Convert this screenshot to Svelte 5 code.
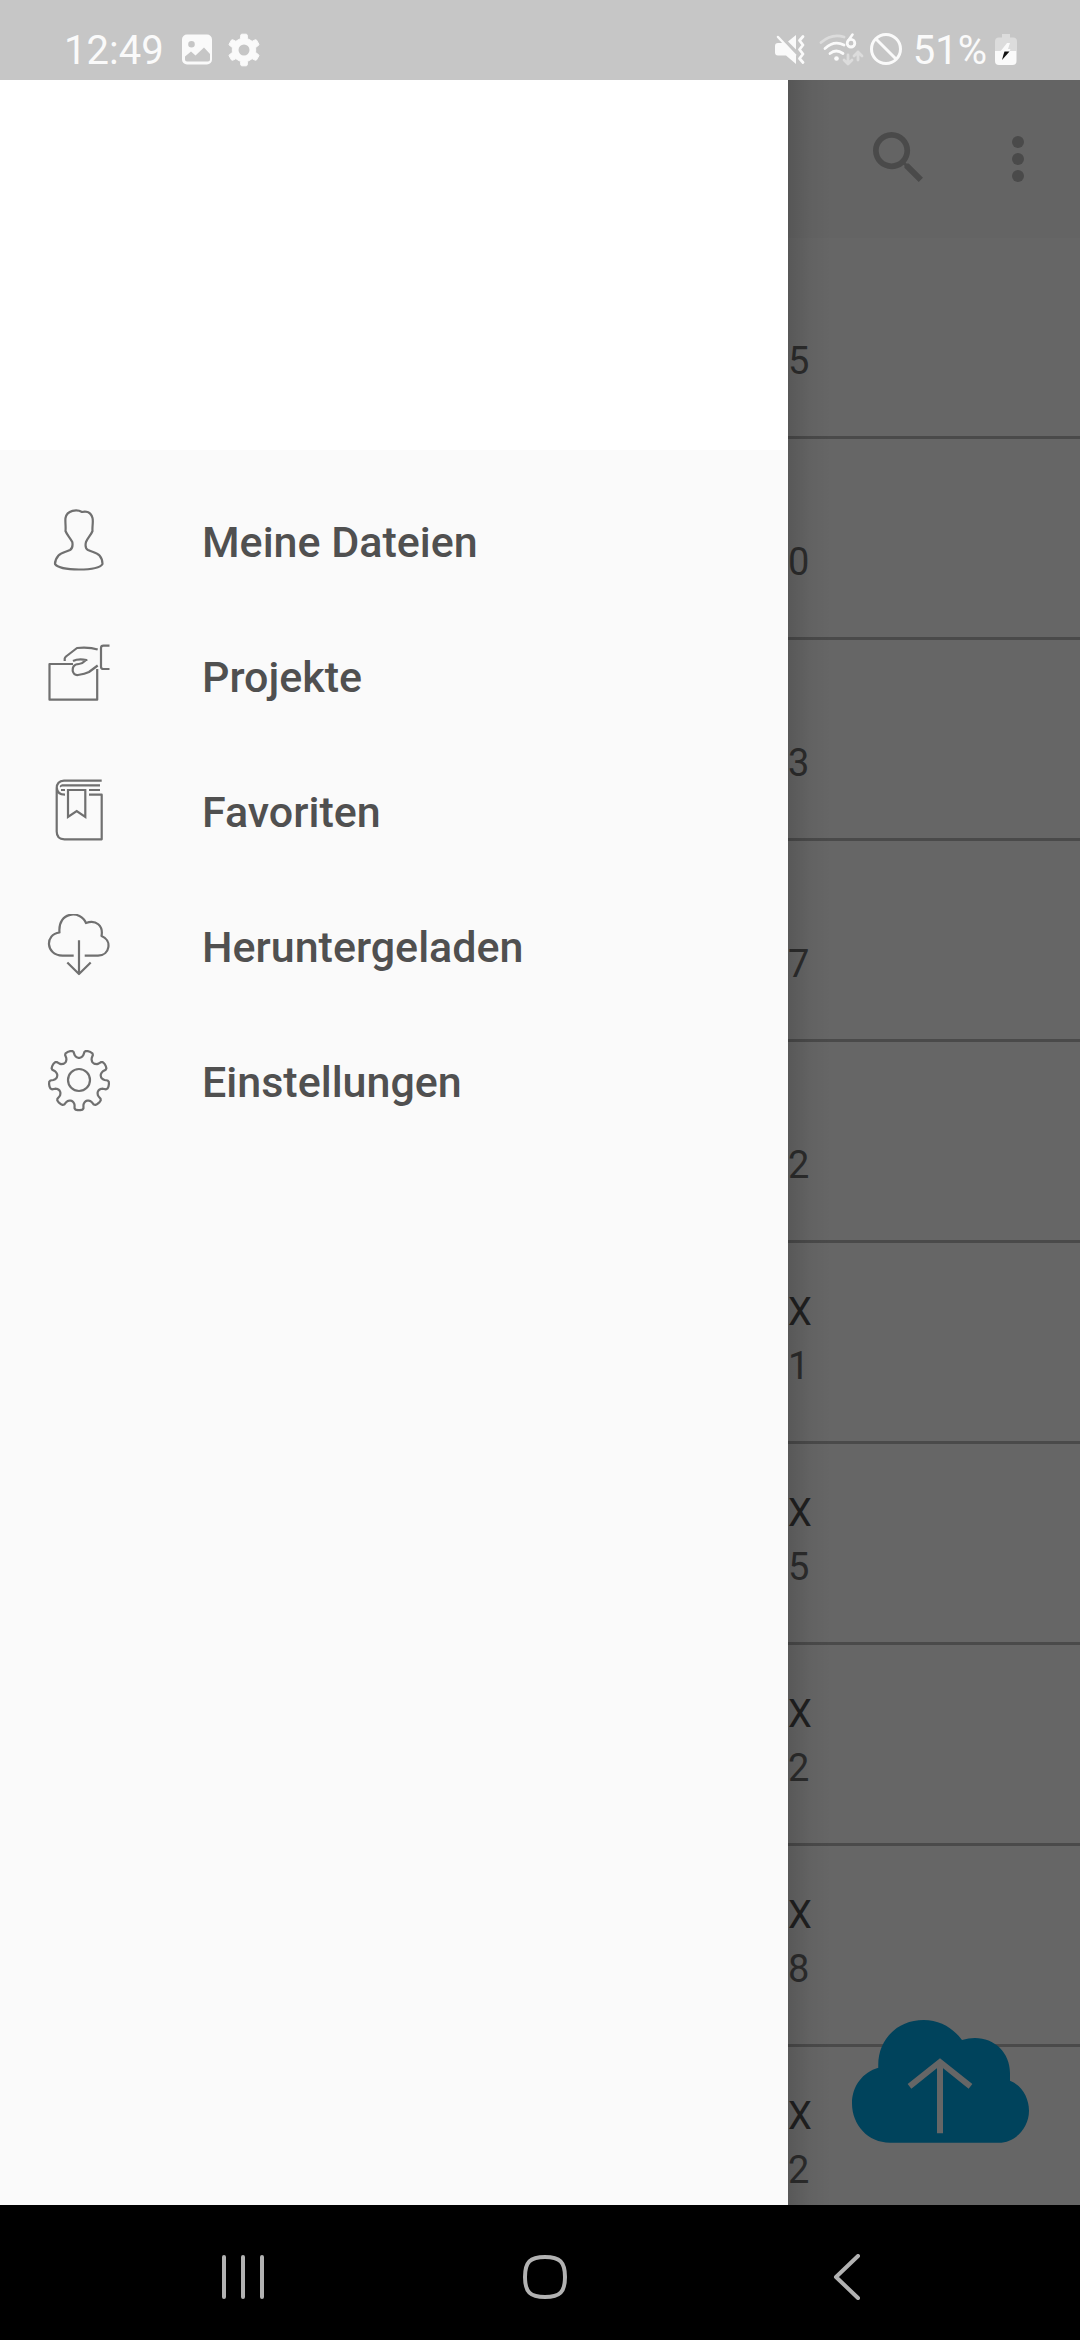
<script lang="ts">
	const menu = [
		{ icon: 'user', label: 'Meine Dateien' },
		{ icon: 'projects', label: 'Projekte' },
		{ icon: 'book', label: 'Favoriten' },
		{ icon: 'download', label: 'Heruntergeladen' },
		{ icon: 'gear', label: 'Einstellungen' }
	];

	const files = [
		{ name: '', info: '5' },
		{ name: '', info: '0' },
		{ name: '', info: '3' },
		{ name: '', info: '7' },
		{ name: '', info: '2' },
		{ name: 'X', info: '1' },
		{ name: 'X', info: '5' },
		{ name: 'X', info: '2' },
		{ name: 'X', info: '8' },
		{ name: 'X', info: '2' }
	];

	// each step is [share of half a tooth pitch, radius]
	function gearPath(cx: number, cy: number, teeth: number, start: number, steps: number[][]) {
		const half = 180 / teeth;
		const at = (deg: number, r: number) => {
			const a = (deg * Math.PI) / 180;
			return `${(cx + r * Math.sin(a)).toFixed(2)} ${(cy - r * Math.cos(a)).toFixed(2)}`;
		};
		const points: string[] = [];
		for (let i = 0; i < teeth; i++) {
			const mid = start + i * half * 2;
			for (const [t, r] of steps) points.push(at(mid - t * half, r));
			for (const [t, r] of [...steps].reverse()) points.push(at(mid + t * half, r));
		}
		return 'M' + points.join('L') + 'Z';
	}

	const menuGear = gearPath(32, 31, 9, 180, [
		[0.9, 22.2],
		[0.76, 22.6],
		[0.58, 24],
		[0.5, 25.5],
		[0.45, 28.6],
		[0.34, 29.8],
		[0.12, 30.2]
	]);
	const statusGear = gearPath(16, 17, 6, 0, [
		[0.7, 11.8],
		[0.55, 12.2],
		[0.4, 15.4],
		[0.3, 16]
	]);
</script>

<div class="screen">
	<header class="status">
		<span class="clock">12:49</span>
		<svg width="32" height="34" viewBox="0 0 32 34">
			<path
				fill="#fafafa"
				fill-rule="evenodd"
				d="M6 1.500h20a5 5 0 0 1 5 5v20a5 5 0 0 1-5 5H6a5 5 0 0 1-5-5v-20a5 5 0 0 1 5-5ZM10.500 8a3.300 3.300 0 1 0 0 6.600a3.300 3.300 0 0 0 0-6.600ZM4 23.500v3a2 2 0 0 0 2 2h21a2 2 0 0 0 2-2v-5.500l-6-6.500l-8.500 8l-4.500-4Z"
			/>
		</svg>
		<svg class="after" width="32" height="34" viewBox="0 0 32 34">
			<path fill="#fafafa" stroke="#fafafa" stroke-linejoin="round" d={statusGear} />
			<circle cx="16" cy="17" r="5.500" fill="#c6c6c6" />
		</svg>

		<div class="right">
			<svg width="30" height="34" viewBox="0 0 30 34">
				<path fill="#fafafa" d="M3 10h6l12 12.500v8.500L11 22.500H3q-3 0-3-3v-6.500q0-3 3-3ZM13 8.500L21 2v14.500Z" />
				<path fill="none" stroke="#c6c6c6" stroke-width="2" d="M6 4L22 20.500" />
				<path fill="none" stroke="#fafafa" stroke-width="2.500" stroke-linecap="round" d="M3 4L20 22" />
				<path
					fill="none"
					stroke="#fafafa"
					stroke-width="2.800"
					stroke-linecap="round"
					stroke-linejoin="round"
					d="M28 3.500l-3.500 4l3.500 4.500l-3.500 4.500l3.500 4.500l-3.500 4.500l3.500 4"
				/>
			</svg>
			<svg class="wifi" width="45" height="34" viewBox="0 0 45 34">
				<g fill="none" stroke-width="2.800" stroke-linecap="round">
					<path stroke="#dcdcdc" d="M2 9.500Q13 0 25 4" />
					<path stroke="#fafafa" d="M6 15.500Q15 7 25 12M11 20.500Q17 15.500 24 20.500" />
					<path stroke="#dcdcdc" stroke-linejoin="round" d="M29 22v9m-4-4l4 4l4-4M39 27v-8m-4 4l4-4l4 4" />
					<path stroke="#fafafa" stroke-width="2.500" d="M33.500 1.500L29 8" />
					<circle cx="32" cy="10.200" r="3.800" stroke="#fafafa" />
				</g>
				<circle cx="17.500" cy="25.500" r="2.300" fill="#fafafa" />
			</svg>
			<svg class="block" width="34" height="34" viewBox="0 0 34 34">
				<g fill="none" stroke="#fafafa" stroke-width="3">
					<circle cx="17" cy="16" r="14.500" />
					<path d="M7 6l20 20" />
				</g>
			</svg>
			<span class="clock">51%</span>
			<svg width="22" height="34" viewBox="0 0 22 34">
				<path fill="#dcdcdc" d="M7 1h8v3.500h3q4 0 4 4V18H0V8.500q0-4 4-4h3Z" />
				<path fill="#fafafa" d="M0 18h21.500v10q0 4-4 4H4q-4 0-4-4Z" />
				<path fill="#fafafa" d="M12 10h3l-2 6h2.500l-1.500 3H5Z" />
				<path fill="#111" d="M9.500 18.500h5L7 27l1.500-5.500Z" />
			</svg>
		</div>
	</header>

	<main>
		<nav class="drawer" aria-label="Menü">
			<div class="cover"></div>
			<ul class="menu">
				{#each menu as item}
					<li>
						<a href="#{item.icon}">
							<svg width="63" height="63" viewBox="0 0 63 63">
								{#if item.icon === 'user'}
									<path
										d="M35 3C30 0 20 1 18.500 9C18 13 19 18 18.500 22C20 26 23 28.500 25.300 33C26 37 25.500 39.500 23 41C19 43 14 43.500 11.500 46.500C8.500 50 8 53 8 55C11 59 20 60.500 32 60.500S53 59 55.500 55C55.500 53 55.500 50 52.500 46.500C50 43.500 45 43 41 41C38.500 39.500 38 37 39 33C41 28.500 44 26 45.500 22C45 18 46.500 13 45.500 9C44 3 39 2 35 3Z"
									/>
								{:else if item.icon === 'projects'}
									<path d="M26 20H2.500v35.700h47.700V25" />
									<path d="M17.700 17v-2.500Q18 13.500 19 12.500L30 4Q43 3 50.700 5.500" />
									<path d="M62.500 1.700h-6Q54 1.700 54 4v18.700Q54 25 56.500 25h6" />
									<path
										d="M26 17Q31 14.500 39.500 16C37.500 16 37 20 32 20C26 20 25.500 24 25.700 27Q27 31.500 31 31Q38 30 42 28L50.700 21.500"
									/>
								{:else if item.icon === 'book'}
									<path
										d="M54.700 1.700H17Q9.700 2 9.700 9.500V52.500Q9.700 60.300 17.500 60.300H54.700V15.700H42M9.700 8Q10 15.700 18 15.700M53 6.300H15.500Q13.500 7 14 8M42 11H53M14 11h4"
									/>
									<path d="M21 11H38.300V38L29.700 32L21 38Z" stroke-linejoin="miter" />
								{:else if item.icon === 'download'}
									<path
										d="M26.700 41.700H15.500C-2 41-2 20 12.500 18.500C10.500-3 34-4 39 9C49 5 56.500 12 54.500 22C65 26 63.500 41 51 41.700H37.700"
									/>
									<path d="M32 26.300V60M20.300 48.500L32 60L43.700 48.500" />
								{:else}
									<path d={menuGear} />
									<circle cx="32" cy="31" r="11" />
								{/if}
							</svg>
							<span>{item.label}</span>
						</a>
					</li>
				{/each}
			</ul>
		</nav>

		<section class="content">
			<div class="toolbar">
				<button aria-label="Suchen">
					<svg width="50" height="54" viewBox="3 3 17.500 18.900">
						<path
							d="M15.500 14h-.79l-.28-.27C15.410 12.590 16 11.110 16 9.500 16 5.910 13.090 3 9.500 3S3 5.910 3 9.500 5.910 16 9.500 16c1.610 0 3.090-.59 4.230-1.570l.27.28v.79l5 4.990L20.490 19l-4.990-5zm-6 0C7.010 14 5 11.990 5 9.500S7.010 5 9.500 5 14 7.010 14 9.500 11.990 14 9.500 14z"
						/>
					</svg>
				</button>
				<button aria-label="Weitere Optionen">
					<svg width="12" height="46" viewBox="0 0 12 46">
						<circle cx="6" cy="6" r="6" />
						<circle cx="6" cy="23" r="6" />
						<circle cx="6" cy="40" r="6" />
					</svg>
				</button>
			</div>
			<ul class="files">
				{#each files as file}
					<li>
						<div class="name">{file.name}</div>
						<div class="info">{file.info}</div>
					</li>
				{/each}
			</ul>
			<button class="upload" aria-label="Hochladen">
				<svg width="178" height="124" viewBox="0 0 178 124">
					<path
						fill="#00435c"
						d="M38 122.700C16 122.700 0 105 0 83.300C0 66 11 52 26.300 47.700C25 20 45 0 71.700 0C88 0 101 8 110 20C135 12 158 28 158 53V60.700C169 65 177 77 177 90.700C177 108 163 122.700 147 122.700Z"
					/>
					<path fill="none" stroke="#666" stroke-width="6" d="M88 113.300V42M57.500 66.300L88 42L118.500 66.300" />
				</svg>
			</button>
		</section>
	</main>

	<footer class="navbar">
		<button aria-label="Letzte Apps">
			<svg width="44" height="46" viewBox="0 0 44 46">
				<path d="M3 3v40M22 3v40M41 3v40" />
			</svg>
		</button>
		<button aria-label="Startseite">
			<svg width="44" height="46" viewBox="0 0 44 46">
				<path d="M22 3C37 3 42 8 42 23S37 43 22 43S2 38 2 23S7 3 22 3Z" />
			</svg>
		</button>
		<button aria-label="Zurück">
			<svg width="28" height="46" viewBox="0 0 28 46">
				<path d="M25 2L3 23L25 44" />
			</svg>
		</button>
	</footer>
</div>

<style>
	:global(body) {
		margin: 0;
	}
	.screen {
		display: flex;
		flex-direction: column;
		height: 100vh;
		overflow: hidden;
		font-family: Roboto, 'Liberation Sans', sans-serif;
	}
	svg {
		display: block;
		flex: none;
	}
	ul {
		margin: 0;
		padding: 0;
		list-style: none;
	}
	button {
		padding: 0;
		border: 0;
		background: none;
		cursor: pointer;
	}

	.status {
		display: flex;
		align-items: center;
		height: 60px;
		padding: 20px 63px 0 64px;
		background: #c6c6c6;
	}
	.clock {
		margin-right: 17px;
		padding-top: 2px;
		font-size: 40px;
		line-height: 48px;
		color: #fafafa;
	}
	.after {
		margin-left: 15px;
	}
	.right {
		display: flex;
		align-items: center;
		margin-left: auto;
	}
	.right .clock {
		margin: 0 8px 0 10px;
	}
	.wifi {
		margin-left: 14px;
	}
	.block {
		margin-left: 5px;
	}

	main {
		display: grid;
		grid-template-columns: minmax(0, 1fr) 292px;
		flex: 1;
		min-height: 0;
	}

	.drawer {
		background: #fafafa;
	}
	.cover {
		height: 370px;
		background: #fff;
	}
	.menu {
		padding-top: 23px;
	}
	.menu a {
		display: flex;
		align-items: center;
		gap: 92px;
		height: 135px;
		padding-left: 47px;
		color: #505050;
		font-size: 43px;
		font-weight: 500;
		line-height: 52px;
		text-decoration: none;
	}
	.menu span {
		padding-top: 2px;
	}
	.menu svg {
		fill: none;
		stroke: #707070;
		stroke-width: 2.2;
		stroke-linejoin: round;
	}

	.content {
		position: relative;
		overflow: hidden;
		background: #666;
	}
	/* shadow that the drawer throws on the list */
	.content::before {
		content: '';
		position: absolute;
		top: 0;
		bottom: 0;
		left: 0;
		width: 44px;
		background: linear-gradient(to right, rgba(0, 0, 0, 0.14), rgba(0, 0, 0, 0.04) 50%, transparent);
		pointer-events: none;
	}
	.toolbar {
		display: flex;
		align-items: center;
		justify-content: flex-end;
		gap: 89px;
		height: 158px;
		padding-right: 56px;
		background: #646464;
	}
	.toolbar svg {
		fill: #4a4a4a;
	}
	.files li {
		box-sizing: border-box;
		height: 201px;
		padding-top: 42px;
		border-bottom: 3px solid #4a4a4a;
		font-size: 38px;
		line-height: 54px;
	}
	.name {
		height: 54px;
		color: #202020;
	}
	.info {
		color: #2c2c2c;
	}
	.upload {
		position: absolute;
		right: 50px;
		bottom: 61px;
	}

	.navbar {
		display: grid;
		grid-template-columns: repeat(3, 1fr);
		height: 135px;
		padding: 0 82px 0 92px;
		background: #000;
	}
	.navbar button {
		display: grid;
		place-items: center;
		padding-top: 9px;
	}
	.navbar svg {
		fill: none;
		stroke: #b2b2b2;
		stroke-width: 4;
		stroke-linecap: round;
		stroke-linejoin: round;
	}
</style>
